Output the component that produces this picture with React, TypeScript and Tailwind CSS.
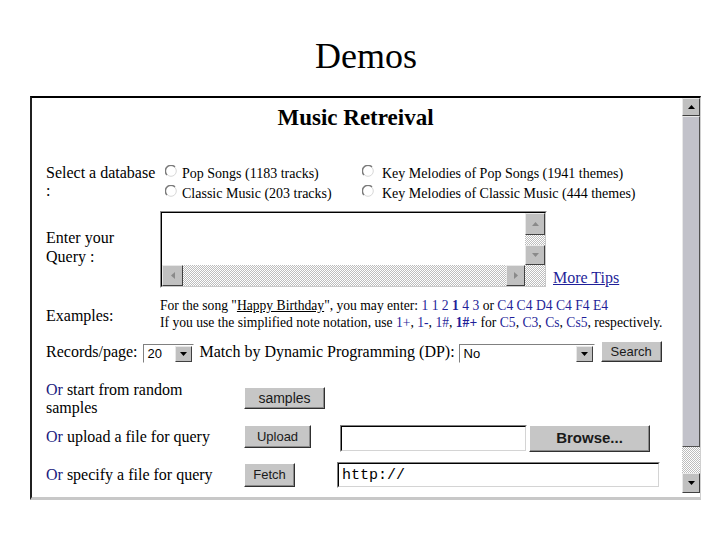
import type { ReactNode } from "react";

const SANS = "font-['Liberation_Sans',Arial,sans-serif]";
const LINK = "text-[#1f1f99]";

function Arrow({ dir, color = "#000" }: { dir: "up" | "down" | "left" | "right"; color?: string }) {
  const pts = {
    up: "0,4 7,4 3.5,0",
    down: "0,0 7,0 3.5,4",
    left: "4,0 4,7 0,3.5",
    right: "0,0 0,7 4,3.5",
  }[dir];
  const vertical = dir === "up" || dir === "down";
  return (
    <svg width={vertical ? 7 : 4} height={vertical ? 4 : 7} viewBox={vertical ? "0 0 7 4" : "0 0 4 7"}>
      <polygon points={pts} fill={color} />
    </svg>
  );
}

function ScrollBtn({
  dir,
  className = "",
  faded = false,
}: {
  dir: "up" | "down" | "left" | "right";
  className?: string;
  faded?: boolean;
}) {
  return (
    <div
      className={`flex shrink-0 items-center justify-center border border-t-[#e8e8e8] border-l-[#e8e8e8] border-r-[#404040] border-b-[#404040] bg-[#c0c0c0] ${className}`}
    >
      <Arrow dir={dir} color={faded ? "#8a8a8a" : "#000"} />
    </div>
  );
}

function Checker({ className = "" }: { className?: string }) {
  return (
    <div
      className={`bg-[image:repeating-conic-gradient(#bdbdbd_0%_25%,#ffffff_0%_50%)] bg-[length:2px_2px] ${className}`}
    />
  );
}

function Btn({ children, className = "" }: { children: ReactNode; className?: string }) {
  return (
    <div
      className={`flex shrink-0 items-center justify-center border border-t-white border-l-white border-r-[#303030] border-b-[#303030] bg-[#c6c6c6] text-[13px] text-[#1a1a1a] shadow-[inset_-1px_-1px_0_#8a8a8a] ${SANS} ${className}`}
    >
      {children}
    </div>
  );
}

function Sunken({ children, className = "" }: { children?: ReactNode; className?: string }) {
  return (
    <div className={`shrink-0 border border-[#808080] border-r-white border-b-white ${className}`}>
      <div className="flex h-full items-center border border-black border-r-[#d4d4d4] border-b-[#d4d4d4] bg-white">
        {children}
      </div>
    </div>
  );
}

function Select({ value, className = "" }: { value: string; className?: string }) {
  return (
    <div
      className={`flex h-[19px] shrink-0 items-center border border-[#808080] border-r-white border-b-white bg-white ${className}`}
    >
      <span className={`flex-1 pl-[4px] text-[13px] leading-none ${SANS}`}>{value}</span>
      <ScrollBtn dir="down" className="mr-[1px] h-[16px] w-[17px]" />
    </div>
  );
}

function Radio({ className = "" }: { className?: string }) {
  return (
    <svg width="12" height="12" viewBox="0 0 12 12" className={`shrink-0 ${className}`}>
      <circle cx="6" cy="6" r="5.3" fill="#fff" stroke="#d8d8d8" />
      <path d="M10 2 A5.3 5.3 0 0 0 2 10" fill="none" stroke="#7a7a7a" strokeWidth="1.4" />
    </svg>
  );
}

function QueryBox() {
  return (
    <div className="flex h-[77px] w-[387px] shrink-0 border border-[#909090] border-r-white border-b-white">
      <div className="flex flex-1 flex-col border border-black border-r-[#c8c8c8] border-b-[#c8c8c8] bg-white">
        <div className="flex h-[52px]">
          <div className="flex-1" />
          <div className="flex w-[20px] flex-col">
            <ScrollBtn dir="up" faded className="h-[22px]" />
            <Checker className="flex-1" />
            <ScrollBtn dir="down" faded className="h-[20px]" />
          </div>
        </div>
        <div className="flex h-[21px]">
          <ScrollBtn dir="left" faded className="w-[21px]" />
          <Checker className="flex-1" />
          <ScrollBtn dir="right" faded className="w-[19px]" />
          <Checker className="w-[20px]" />
        </div>
      </div>
    </div>
  );
}

export default function App() {
  return (
    <div className="h-[540px] w-[720px] overflow-hidden bg-white pt-[36px] font-['Liberation_Serif','Times_New_Roman',serif] text-black">
      <h1 className="pl-[12px] text-center text-[36px] leading-[40px]">Demos</h1>

      <div className="mt-[20px] ml-[30px] flex h-[404px] w-[671px] border-t-2 border-l-2 border-r border-b-[3px] border-t-black border-l-[#202020] border-r-[#d0d0d0] border-b-[#c8c8c8]">
        {/* form body */}
        <div className="flex-1 pt-[7px] pl-[14px]">
          <h2 className="-ml-[14px] pr-[3px] text-center text-[23px] leading-[26px] font-bold">Music Retreival</h2>

          <div className="mt-[33px] flex">
            <div className="w-[114px] text-[16px] leading-[18px] whitespace-nowrap">
              Select a database
              <br />:
            </div>
            <div className="grid grid-cols-[202px_1fr] text-[14px] leading-[20px] whitespace-nowrap">
              <div className="flex h-[20px] items-start">
                <Radio className="mt-[1px] ml-[5px] mr-[5px]" />
                Pop Songs (1183 tracks)
              </div>
              <div className="flex h-[20px] items-start">
                <Radio className="mt-[1px] mr-[8px]" />
                Key Melodies of Pop Songs (1941 themes)
              </div>
              <div className="flex h-[20px] items-start">
                <Radio className="mt-[1px] ml-[5px] mr-[5px]" />
                Classic Music (203 tracks)
              </div>
              <div className="flex h-[20px] items-start">
                <Radio className="mt-[1px] mr-[8px]" />
                Key Melodies of Classic Music (444 themes)
              </div>
            </div>
          </div>

          <div className="mt-[7px] flex">
            <div className="w-[114px] pt-[17px] text-[16px] leading-[19px]">
              Enter your
              <br />
              Query :
            </div>
            <QueryBox />
            <a className={`mb-[1px] ml-[6px] self-end text-[16px] leading-[18px] underline ${LINK}`}>More Tips</a>
          </div>

          <div className="mt-[9px] flex">
            <div className="w-[114px] pt-[10px] text-[16px] leading-[18px]">Examples:</div>
            <div className="text-[13.6px] leading-[17px] whitespace-nowrap">
              <div>
                For the song "<u>Happy Birthday</u>", you may enter:{" "}
                <span className={LINK}>
                  1 1 2 <b>1</b> 4 3
                </span>{" "}
                or <span className={LINK}>C4 C4 D4 C4 F4 E4</span>
              </div>
              <div>
                If you use the simplified note notation, use <span className={LINK}>1+</span>,{" "}
                <span className={LINK}>1-</span>, <span className={LINK}>1#</span>,{" "}
                <b className={LINK}>1#+</b> for <span className={LINK}>C5</span>,{" "}
                <span className={LINK}>C3</span>, <span className={LINK}>Cs</span>,{" "}
                <span className={LINK}>Cs5</span>, respectively.
              </div>
            </div>
          </div>

          <div className="mt-[10px] flex items-start text-[16px] leading-[22px] whitespace-nowrap">
            <span>Records/page:</span>
            <Select value="20" className="mt-[3px] ml-[5px] w-[51px]" />
            <span className="ml-[6px]">Match by Dynamic Programming (DP):</span>
            <Select value="No" className="mt-[3px] ml-[4px] w-[136px]" />
            <Btn className="ml-[6px] h-[21px] w-[61px]">Search</Btn>
          </div>

          <div className="mt-[18px] flex">
            <div className="w-[198px] text-[16px] leading-[18px]">
              <span className="text-[#1c1c80]">Or</span> start from random
              <br />
              samples
            </div>
            <Btn className="mt-[6px] h-[22px] w-[81px] text-[14px]">samples</Btn>
          </div>

          <div className="mt-[8px] flex items-start">
            <div className="w-[198px] pt-[3px] text-[16px] leading-[18px] whitespace-nowrap">
              <span className="text-[#1c1c80]">Or</span> upload a file for query
            </div>
            <Btn className="h-[23px] w-[67px]">Upload</Btn>
            <Sunken className="ml-[29px] h-[27px] w-[187px]" />
            <Btn className="ml-[2px] h-[27px] w-[121px] text-[15px] font-bold">Browse...</Btn>
          </div>

          <div className="mt-[10px] flex items-start">
            <div className="w-[198px] pt-[4px] text-[16px] leading-[18px] whitespace-nowrap">
              <span className="text-[#1c1c80]">Or</span> specify a file for query
            </div>
            <Btn className="mt-[1px] h-[24px] w-[51px]">Fetch</Btn>
            <Sunken className="ml-[42px] h-[26px] w-[323px]">
              <span className="pl-[3px] font-['Liberation_Mono','Courier_New',monospace] text-[15px] leading-none">
                http://
              </span>
            </Sunken>
          </div>
        </div>

        {/* page scrollbar */}
        <div className="flex w-[18px] flex-col">
          <ScrollBtn dir="up" className="h-[18px]" />
          <div className="h-[331px] border border-t-[#e8e8e8] border-l-[#e8e8e8] border-r-[#505050] border-b-[#505050] bg-[#c2c2ca]" />
          <Checker className="flex-1" />
          <ScrollBtn dir="down" className="h-[20px]" />
          <div className="h-[4px]" />
        </div>
      </div>
    </div>
  );
}
